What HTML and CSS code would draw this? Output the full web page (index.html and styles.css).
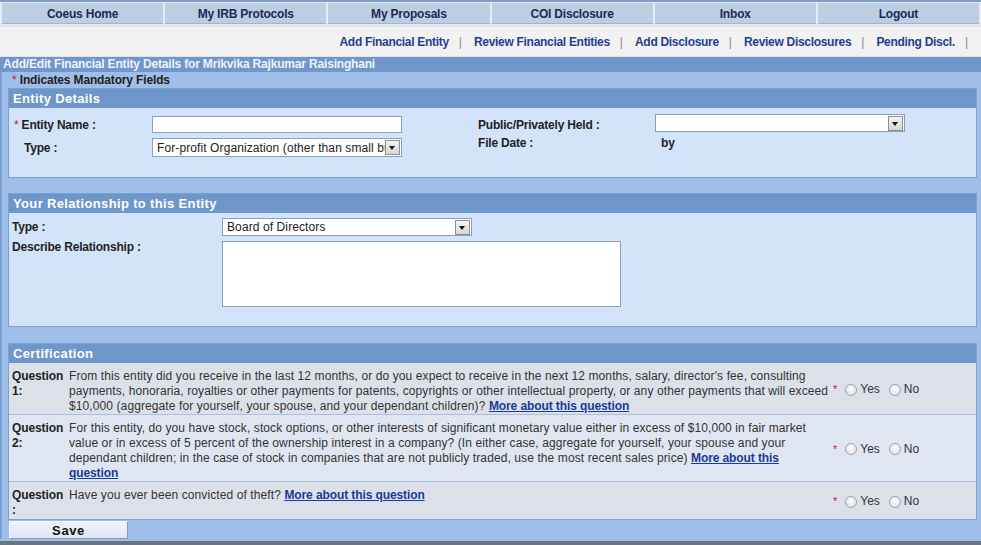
FILE: index.html
```html
<!DOCTYPE html>
<html>
<head>
<meta charset="utf-8">
<title>Add/Edit Financial Entity</title>
<link rel="stylesheet" href="styles.css">
</head>
<body>
<div class="page">
  <nav class="topnav">
    <a href="#">Coeus Home</a>
    <a href="#">My IRB Protocols</a>
    <a href="#">My Proposals</a>
    <a href="#">COI Disclosure</a>
    <a href="#">Inbox</a>
    <a href="#">Logout</a>
  </nav>
  <div class="subnav">
    <a href="#">Add Financial Entity</a><span class="sep">|</span>
    <a href="#">Review Financial Entities</a><span class="sep">|</span>
    <a href="#">Add Disclosure</a><span class="sep">|</span>
    <a href="#">Review Disclosures</a><span class="sep">|</span>
    <a href="#">Pending Discl.</a><span class="sep">|</span>
  </div>
  <div class="title">Add/Edit Financial Entity Details for Mrikvika Rajkumar Raisinghani</div>
  <div class="content">
    <div class="mandatory"><span class="req">*</span> Indicates Mandatory Fields</div>

    <section class="panel">
      <h2 class="panel-head">Entity Details</h2>
      <div class="panel-body entity-grid">
        <label class="lbl lbl-req"><span class="req">*</span> Entity Name :</label>
        <div class="input"></div>
        <span></span>
        <label class="lbl">Public/Privately Held :</label>
        <div class="select select-top"><span class="sel-text"></span><span class="arrow"></span></div>

        <label class="lbl lbl-indent">Type :</label>
        <div class="select select-tall"><span class="sel-text">For-profit Organization (other than small business)</span><span class="arrow"></span></div>
        <span></span>
        <label class="lbl lbl-top">File Date :</label>
        <span class="by">by</span>
      </div>
    </section>

    <section class="panel panel-gap">
      <h2 class="panel-head">Your Relationship to this Entity</h2>
      <div class="panel-body rel-grid">
        <label class="lbl">Type :</label>
        <div class="select select-rel"><span class="sel-text">Board of Directors</span><span class="arrow"></span></div>
        <label class="lbl lbl-top">Describe Relationship :</label>
        <div class="textarea"></div>
      </div>
    </section>

    <section class="panel panel-gap2">
      <h2 class="panel-head">Certification</h2>
      <div class="questions">
        <div class="q-row odd">
          <div class="q-label">Question 1:</div>
          <div class="q-text">From this entity did you receive in the last 12 months, or do you expect to receive in the next 12 months, salary, director's fee, consulting payments, honoraria, royalties or other payments for patents, copyrights or other intellectual property, or any other payments that will exceed $10,000 (aggregate for yourself, your spouse, and your dependant children)? <a href="#">More about this question</a></div>
          <div class="q-answer"><span class="req">*</span><input type="radio" name="q1"><span class="opt">Yes</span><input type="radio" name="q1"><span class="opt">No</span></div>
        </div>
        <div class="q-row even">
          <div class="q-label">Question 2:</div>
          <div class="q-text">For this entity, do you have stock, stock options, or other interests of significant monetary value either in excess of $10,000 in fair market value or in excess of 5 percent of the ownership interest in a company? (In either case, aggregate for yourself, your spouse and your dependant children; in the case of stock in companies that are not publicly traded, use the most recent sales price) <a href="#">More about this question</a></div>
          <div class="q-answer"><span class="req">*</span><input type="radio" name="q2"><span class="opt">Yes</span><input type="radio" name="q2"><span class="opt">No</span></div>
        </div>
        <div class="q-row odd last">
          <div class="q-label">Question :</div>
          <div class="q-text">Have you ever been convicted of theft? <a href="#">More about this question</a></div>
          <div class="q-answer"><span class="req">*</span><input type="radio" name="q3"><span class="opt">Yes</span><input type="radio" name="q3"><span class="opt">No</span></div>
        </div>
      </div>
    </section>

    <div class="actions"><button class="save" type="button">Save</button></div>
  </div>
</div>
</body>
</html>
```

FILE: styles.css
```css
* { box-sizing: border-box; }
html, body { margin: 0; padding: 0; }
body {
  font-family: "Liberation Sans", Arial, sans-serif;
  font-size: 12px;
  color: #222;
  background: #a0bfe8;
}
.page {
  width: 981px;
  height: 545px;
  overflow: hidden;
  background: #a0bfe8;
  border-bottom: 4px solid #6c7480;
}

/* top nav */
.topnav {
  display: grid;
  grid-template-columns: repeat(6, 1fr);
  column-gap: 2px;
  padding: 1px 2px 2px 2px;
  border-top: 2px solid #7b9ac6;
  border-bottom: 1px solid #dfe6ee;
  background: #e3eaf3;
}
.topnav a {
  display: block;
  height: 21px;
  line-height: 23px;
  text-align: center;
  font-weight: bold;
  color: #1b2a58;
  text-decoration: none;
  background: #bccee3;
  border-bottom: 1px solid #9fb4cf;
  letter-spacing: -0.2px;
}

/* sub nav */
.subnav {
  height: 30px;
  display: flex;
  justify-content: flex-end;
  align-items: center;
  padding-right: 13px;
  background: #f2f2f2;
  border-bottom: 1px solid #e3e3e3;
}
.subnav a {
  color: #1f3e92;
  font-weight: bold;
  text-decoration: none;
  letter-spacing: -0.3px;
}
.subnav .sep {
  color: #888;
  margin: 0 12px 0 10px;
  font-weight: normal;
}
.subnav .sep:last-child { margin-right: 0; }

.title {
  height: 15px;
  line-height: 15px;
  padding-left: 3px;
  background: #6f97cb;
  color: #eef2f8;
  font-weight: bold;
  letter-spacing: -0.18px;
}

.content {
  border-left: 2px solid #7a9fd2;
}
.mandatory {
  height: 16px;
  line-height: 16px;
  padding-left: 10px;
  font-weight: bold;
  color: #222;
  letter-spacing: -0.15px;
}
.req { color: #d0103a; font-weight: normal; }

/* panels */
.panel {
  margin: 0 4px 0 6px;
  border: 1px solid #7d9fd0;
  background: #d3e4fa;
}
.panel-gap { margin-top: 15px; }
.panel-gap2 { margin-top: 16px; }
.panel-head {
  margin: 0;
  height: 19px;
  line-height: 19px;
  padding-left: 4px;
  background: #6d96ca;
  color: #fff;
  font-size: 13px;
  font-weight: bold;
  letter-spacing: 0.35px;
}
.lbl {
  font-weight: bold;
  color: #222;
  align-self: center;
  letter-spacing: -0.2px;
}
.lbl-top { align-self: start; }

.entity-grid {
  display: grid;
  grid-template-columns: 143px 250px 76px 177px 250px;
  grid-template-rows: 23px 23px;
  padding: 5px 0 18px 0;
}
.entity-grid .lbl-req { padding-left: 5px; }
.entity-grid .lbl-indent { padding-left: 15px; }
.entity-grid .lbl-top { line-height: 15px; }
.by { font-weight: bold; color: #222; padding-left: 6px; line-height: 15px; }

.input {
  height: 17px;
  align-self: center;
  background: #fff;
  border: 1px solid #8c9fb5;
}
.select {
  height: 18px;
  align-self: center;
  display: flex;
  align-items: center;
  background: #fff;
  border: 1px solid #8c9fb5;
  padding: 1px;
}
.select-top { align-self: start; margin-top: 1px; }
.select-tall { height: 19px; }
.select-rel { width: 250px; justify-self: start; }
.sel-text {
  flex: 1;
  white-space: nowrap;
  overflow: hidden;
  padding-left: 3px;
  font-size: 12px;
  color: #222;
  line-height: 14px;
  letter-spacing: 0.1px;
}
.arrow {
  flex: none;
  width: 15px;
  height: 15px;
  background: linear-gradient(#f2f2f2, #d6d6d6);
  border: 1px solid #8f8f8f;
  position: relative;
}
.arrow::after {
  content: "";
  position: absolute;
  left: 3px;
  top: 5px;
  border-left: 3.5px solid transparent;
  border-right: 3.5px solid transparent;
  border-top: 4px solid #111;
}

.rel-grid {
  display: grid;
  grid-template-columns: 210px 399px;
  row-gap: 5px;
  padding: 5px 0 19px 3px;
}
.rel-grid .lbl-top { line-height: 13px; }
.textarea {
  height: 66px;
  background: #fff;
  border: 1px solid #8c9fb5;
}

/* questions */
.q-row {
  display: grid;
  grid-template-columns: 60px 761px 1fr;
  align-items: start;
  border-bottom: 1px solid #aac0e0;
  line-height: 15px;
}
.q-row.last { border-bottom: none; }
.q-row.odd { background: #dce1e9; }
.q-row.even { background: #dfe6f1; }
.q-label {
  padding: 6px 0 0 3px;
  font-weight: bold;
  color: #222;
  width: 58px;
  letter-spacing: -0.1px;
}
.q-text {
  padding: 6px 0 0 0;
  color: #333;
  letter-spacing: 0.1px;
}
.q-row.last .q-label,
.q-row.last .q-text { padding-bottom: 1px; }
.q-text a {
  color: #1a3a99;
  font-weight: bold;
  text-decoration: underline;
  letter-spacing: -0.1px;
}
.q-answer {
  align-self: center;
  display: flex;
  align-items: center;
  padding: 2px 0 0 3px;
  color: #333;
  font-size: 12px;
}
.q-answer .req { margin-right: 5px; font-size: 11px; }
.q-answer input {
  appearance: none;
  -webkit-appearance: none;
  width: 12px;
  height: 12px;
  margin: 0 3px 0 3px;
  border-radius: 50%;
  border: 1px solid #9aa4ae;
  background: radial-gradient(circle at 50% 40%, #fdfdfd, #dcdcdc);
}
.q-answer .opt { margin-right: 6px; }

.actions { padding: 1px 0 0 7px; }
.save {
  width: 119px;
  height: 18px;
  padding: 0;
  font-family: "Liberation Sans", Arial, sans-serif;
  font-size: 13px;
  font-weight: bold;
  letter-spacing: 0.6px;
  color: #111;
  background: linear-gradient(#eef2fa, #e0e6f2);
  border: 1px solid #8d9ab3;
  border-top-color: #f4f6fb;
  border-left-color: #f4f6fb;
}
```
